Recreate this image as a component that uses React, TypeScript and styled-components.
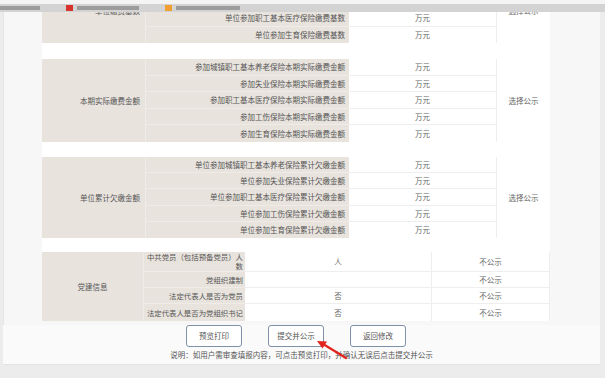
import styled, { createGlobalStyle } from 'styled-components'

const GlobalStyle = createGlobalStyle`
  body {
    margin: 0;
    background: #ececec;
    font-family: 'Noto Sans CJK SC', 'Noto Sans', sans-serif;
  }
`

type Row = { label: string; value: string }
type Section = { title: string; rows: Row[]; note: string; rowH: number; gap: number }

const insurance = ['城镇职工基本养老', '失业', '职工基本医疗', '工伤', '生育']

const sections: Section[] = [
  {
    title: '单位缴费基数',
    rows: ['城镇职工基本养老', '失业', '职工基本医疗', '生育'].map((k) => ({ label: `单位参加${k}保险缴费基数`, value: '万元' })),
    note: '选择公示',
    rowH: 16.5,
    gap: 0,
  },
  {
    title: '本期实际缴费金额',
    rows: insurance.map((k) => ({ label: `参加${k}保险本期实际缴费金额`, value: '万元' })),
    note: '选择公示',
    rowH: 16.6,
    gap: 16,
  },
  {
    title: '单位累计欠缴金额',
    rows: insurance.map((k) => ({ label: `单位参加${k}保险累计欠缴金额`, value: '万元' })),
    note: '选择公示',
    rowH: 16.2,
    gap: 15,
  },
]

const party = [
  { label: '中共党员（包括预备党员）人数', value: '人' },
  { label: '党组织建制', value: '' },
  { label: '法定代表人是否为党员', value: '否' },
  { label: '法定代表人是否为党组织书记', value: '否' },
]

const App = () => {
  return (
    <PAGE>
      <GlobalStyle />
      <PANEL>
        <TABLES>
          {sections.map((s) => (
            <SECTION key={s.title} $rows={s.rows.length} $rowH={s.rowH} $gap={s.gap}>
              <GROUP_LABEL>{s.title}</GROUP_LABEL>
              {s.rows.map((r, i) => (
                <ROW_CELLS key={r.label} $last={i === s.rows.length - 1}>
                  <ITEM_LABEL>{r.label}</ITEM_LABEL>
                  <VALUE>{r.value}</VALUE>
                </ROW_CELLS>
              ))}
              <NOTE>{s.note}</NOTE>
            </SECTION>
          ))}
          <PARTY_SECTION>
            <GROUP_LABEL $center>党建信息</GROUP_LABEL>
            {party.map((r, i) => (
              <ROW_CELLS key={r.label} $last={i === party.length - 1}>
                <ITEM_LABEL $wrap={i === 0} $tight>{r.label}</ITEM_LABEL>
                <VALUE>{r.value}</VALUE>
                <VALUE>不公示</VALUE>
              </ROW_CELLS>
            ))}
          </PARTY_SECTION>
        </TABLES>
        <ACTIONS>
          <BUTTON>预览打印</BUTTON>
          <BUTTON>提交并公示</BUTTON>
          <BUTTON>返回修改</BUTTON>
        </ACTIONS>
        <HINT>说明：如用户需审查填报内容，可点击预览打印，并确认无误后点击提交并公示</HINT>
      </PANEL>
      <TOP_STRIP>
        <STRIP_BAR>
          <STRIP_TEXT $w={40} />
          <STRIP_ICON $color='#d9342b' />
          <STRIP_TEXT $w={62} />
          <STRIP_ICON $color='#f0a030' />
          <STRIP_TEXT $w={64} />
        </STRIP_BAR>
      </TOP_STRIP>
      <ARROW width='42' height='26' viewBox='0 0 42 26'>
        <line x1='34' y1='22' x2='11' y2='8' stroke='#e3241c' strokeWidth='2.2' strokeLinecap='round' />
        <polygon points='5,5 15,5.5 10.5,12.5' fill='#e3241c' />
      </ARROW>
    </PAGE>
  )
}

export default App

const PAGE = styled.div`
  position: relative;
  width: 605px;
  height: 378px;
  overflow: hidden;
  background: #ececec;
`

const PANEL = styled.div`
  margin-left: 3px;
  width: 597px;
  height: 365px;
  background: #f7f7f7;
  box-shadow: inset 1px 0 0 #e6e6e6;
  display: flex;
  flex-direction: column;
`

const TABLES = styled.div`
  margin: -23px 0 0 39px;
  width: 508px;
  background: #fff;
  display: flex;
  flex-direction: column;
`

const SECTION = styled.div<{ $rows: number; $rowH: number; $gap: number }>`
  margin-top: ${(p) => p.$gap}px;
  display: grid;
  grid-template-columns: 104px 203px 148px 53px;
  grid-template-rows: repeat(${(p) => p.$rows}, ${(p) => p.$rowH}px);
`

const PARTY_SECTION = styled.div`
  margin-top: 14px;
  display: grid;
  grid-template-columns: 102px 101px 187px 118px;
  grid-template-rows: 20px 16px 16px 17px;
`

const GROUP_LABEL = styled.div<{ $center?: boolean }>`
  grid-column: 1;
  grid-row: 1 / -1;
  background: #e8e3dd;
  border-right: 1px solid #efebe6;
  display: flex;
  align-items: center;
  justify-content: ${(p) => (p.$center ? 'center' : 'flex-end')};
  padding-right: ${(p) => (p.$center ? '0' : '5px')};
  font-size: 7.5px;
  color: #555;
`

const ROW_CELLS = styled.div<{ $last: boolean }>`
  display: contents;
  & > * {
    border-bottom: ${(p) => (p.$last ? 'none' : '1px solid #eeeeee')};
  }
`

const ITEM_LABEL = styled.div<{ $wrap?: boolean; $tight?: boolean }>`
  grid-column: 2;
  background: #e8e3dd;
  display: flex;
  align-items: center;
  justify-content: flex-end;
  text-align: right;
  padding: ${(p) => (p.$tight ? '0 2px 0 0' : '0 4px 0 2px')};
  font-size: ${(p) => (p.$tight ? '7.4px' : '7.5px')};
  line-height: 9px;
  color: #555;
  white-space: ${(p) => (p.$wrap ? 'normal' : 'nowrap')};
  overflow: hidden;
  box-sizing: border-box;
  && {
    border-bottom-color: #efebe6;
  }
`

const VALUE = styled.div`
  display: flex;
  align-items: center;
  justify-content: center;
  font-size: 7.5px;
  color: #666;
  border-right: 1px solid #eeeeee;
`

const NOTE = styled.div`
  grid-column: 4;
  grid-row: 1 / -1;
  display: flex;
  align-items: center;
  justify-content: center;
  font-size: 7.5px;
  color: #666;
`

const ACTIONS = styled.div`
  margin-top: 4px;
  padding-right: 11px;
  display: flex;
  justify-content: center;
  gap: 26px;
  background: #fafafa;
`

const BUTTON = styled.button`
  width: 56px;
  height: 22px;
  padding: 0;
  background: #fff;
  border: 1px solid #7f91a8;
  border-radius: 3px;
  font-family: inherit;
  font-size: 7.5px;
  color: #555;
`

const HINT = styled.div`
  flex: 1;
  padding-top: 3px;
  text-align: center;
  font-size: 7.5px;
  line-height: 10px;
  color: #555;
  background: #fafafa;
  border-bottom: 1px solid #e2e2e2;
`

const TOP_STRIP = styled.div`
  position: absolute;
  top: 0;
  left: 0;
  right: 0;
  height: 12px;
  padding-top: 4px;
  box-sizing: border-box;
  background: #f4f4f4;
`

const STRIP_BAR = styled.div`
  height: 8px;
  background: #d3d3d3;
  display: flex;
  align-items: center;
  gap: 4px;
`

const STRIP_TEXT = styled.span<{ $w: number }>`
  width: ${(p) => p.$w}px;
  height: 4px;
  margin-right: 14px;
  background: #8a8a8a;
  opacity: 0.75;
`

const STRIP_ICON = styled.span<{ $color: string }>`
  width: 7px;
  height: 6px;
  margin-left: 8px;
  background: ${(p) => p.$color};
`

const ARROW = styled.svg`
  position: absolute;
  left: 312px;
  top: 336px;
`
